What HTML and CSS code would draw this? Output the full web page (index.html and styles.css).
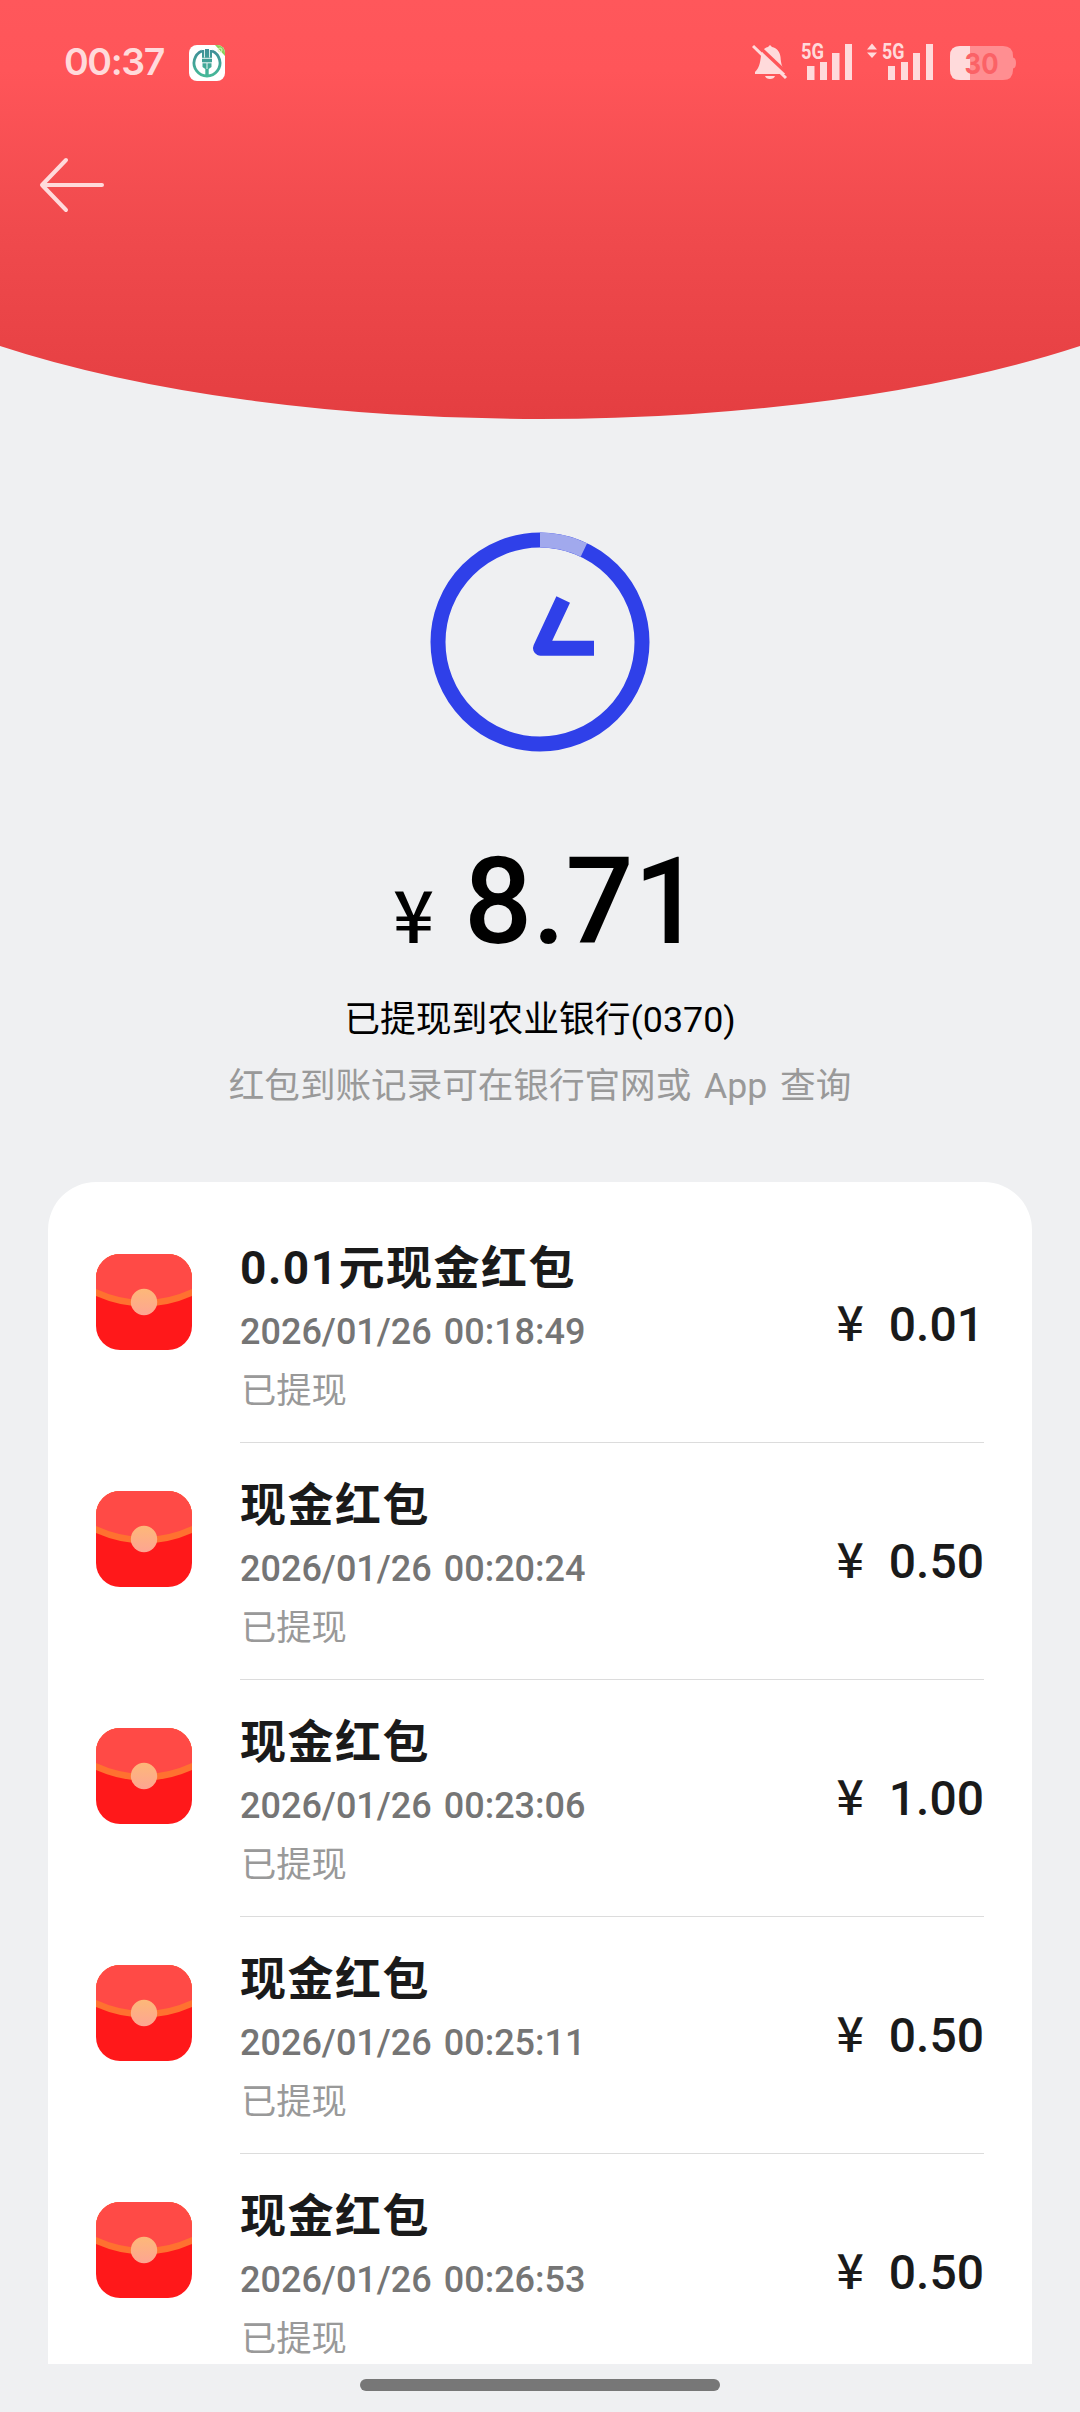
FILE: index.html
```html
<!DOCTYPE html>
<html lang="zh-CN">
<head>
<meta charset="utf-8">
<title>提现详情</title>
<link rel="stylesheet" href="styles.css">
</head>
<body>
<svg class="defs" width="0" height="0">
  <defs>
    <linearGradient id="seal" x1="0" y1="0" x2="0" y2="1"><stop offset="0" stop-color="#fdb878"/><stop offset="1" stop-color="#fda592"/></linearGradient>
    <clipPath id="packet-clip"><rect width="96" height="96" rx="24"/></clipPath>
    <symbol id="packet" viewBox="0 0 96 96">
      <g clip-path="url(#packet-clip)">
        <rect width="96" height="96" fill="#ff181a"/>
        <path d="M0 0H96V42Q48 63 0 42Z" fill="#ff7130"/>
        <path d="M0 0H96V35Q48 57 0 35Z" fill="#ff4a46"/>
      </g>
      <circle cx="48" cy="48" r="13.2" fill="url(#seal)"/>
    </symbol>
  </defs>
</svg>
<div class="screen">
  <header class="header">
    <div class="status">
      <div class="status-left">
        <span class="time">00:37</span>
        <svg width="36" height="36" viewBox="0 0 36 36">
          <defs><linearGradient id="bank" x1="0" y1="0" x2="0" y2="1"><stop offset="0" stop-color="#3f8f97"/><stop offset="1" stop-color="#45b898"/></linearGradient></defs>
          <rect width="36" height="36" rx="8" fill="#fff"/>
          <path d="M13 6A13 13 0 1 0 23 6" fill="none" stroke="url(#bank)" stroke-width="2.800"/>
          <path d="M13 5h2.200v7.500H16V4h4v8.500h.800V5H23v12.500h-.5V22l-2.800 2v7h-3.400v-7l-2.800-2v-4.500H13z" fill="url(#bank)"/>
          <path d="M13 13.300h10M13 17.800h10M18 18v6" stroke="#fff" stroke-width=".9"/>
          <path d="M26 0h2a8 8 0 0 1 8 8v3Z" fill="#8ccf5d"/>
          <circle cx="31" cy="5" r="2" fill="none" stroke="#d9f3b8"/>
        </svg>
      </div>
      <div class="status-right">
        <svg class="bell" width="36" height="36" viewBox="0 0 36 36" fill="#ffdadb">
          <path d="M9 12C10 6 13 3.500 16 3L18 1L20 3C25 4 28 8 28.500 13C29 20 30 23 33 27V30H3V28C7 24 8 20 9 12ZM13 32H23Q22 35 18 35Q14 35 13 32Z"/>
          <path d="M3 -1L37 31" stroke="#ff5559" stroke-width="3.500"/>
          <path d="M1 2L34 34" stroke="#ffdadb" stroke-width="3"/>
        </svg>
        <svg class="signal" width="52" height="42" viewBox="0 0 52 42" fill="#ffdadb">
          <text x="0" y="17" textLength="23" lengthAdjust="spacingAndGlyphs">5G</text>
          <path d="M6 24h7.500v14H6zM19 20h7v18h-7zM31 11h7.500v27H31zM44 2h7v36h-7z"/>
        </svg>
        <svg class="signal signal-data" width="67" height="42" viewBox="0 0 67 42" fill="#ffdadb">
          <path d="M0 7.500L5 1.500L10 7.500zM0 10.500L5 16L10 10.500z"/>
          <text x="15" y="17" textLength="22.500" lengthAdjust="spacingAndGlyphs">5G</text>
          <path d="M21 24h7v14h-7zM34 20h7v18h-7zM46 11h7v27h-7zM59 2h7v36h-7z"/>
        </svg>
        <svg class="battery" width="66" height="34" viewBox="0 0 66 34">
          <path d="M10 0H53Q63 0 63 10V11.500Q66 12 66 17Q66 22 63 22.500V24Q63 34 53 34H10Q0 34 0 24V10Q0 0 10 0Z" fill="#ff8e91"/>
          <path d="M20 0H10Q0 0 0 10V24Q0 34 10 34H20Z" fill="#ffdadb"/>
          <text x="14.500" y="27.500" textLength="34" lengthAdjust="spacingAndGlyphs">30</text>
        </svg>
      </div>
    </div>
    <nav class="nav">
      <svg width="66" height="56" viewBox="0 0 66 56" fill="none" stroke="#ffdadb" stroke-width="4" stroke-linecap="round" stroke-linejoin="round"><path d="M28 3L4 28L28 53M4 28H64"/></svg>
    </nav>
  </header>

  <main class="main">
    <svg class="clock" width="220" height="220" viewBox="0 0 220 220" fill="none" stroke="#2f40e9" stroke-width="15">
      <circle cx="110" cy="110" r="102"/>
      <path d="M110 8A102 102 0 0 1 153.900 17.900" stroke="#a1a9ed"/>
      <path d="M133.200 67.500L110.500 116.200H164" stroke-linejoin="round"/>
    </svg>
    <div class="amount"><span class="yen">¥</span><span class="total">8.71</span></div>
    <p class="bank">已提现到农业银行(0370)</p>
    <p class="hint">红包到账记录可在银行官网或 App 查询</p>

    <ul class="list">
      <li class="row">
        <svg class="packet"><use href="#packet"/></svg>
        <div class="body">
          <div class="info"><h2>0.01元现金红包</h2><time>2026/01/26 00:18:49</time><span class="state">已提现</span></div>
          <div class="price"><span>¥</span><b>0.01</b></div>
        </div>
      </li>
      <li class="row">
        <svg class="packet"><use href="#packet"/></svg>
        <div class="body">
          <div class="info"><h2>现金红包</h2><time>2026/01/26 00:20:24</time><span class="state">已提现</span></div>
          <div class="price"><span>¥</span><b>0.50</b></div>
        </div>
      </li>
      <li class="row">
        <svg class="packet"><use href="#packet"/></svg>
        <div class="body">
          <div class="info"><h2>现金红包</h2><time>2026/01/26 00:23:06</time><span class="state">已提现</span></div>
          <div class="price"><span>¥</span><b>1.00</b></div>
        </div>
      </li>
      <li class="row">
        <svg class="packet"><use href="#packet"/></svg>
        <div class="body">
          <div class="info"><h2>现金红包</h2><time>2026/01/26 00:25:11</time><span class="state">已提现</span></div>
          <div class="price"><span>¥</span><b>0.50</b></div>
        </div>
      </li>
      <li class="row">
        <svg class="packet"><use href="#packet"/></svg>
        <div class="body">
          <div class="info"><h2>现金红包</h2><time>2026/01/26 00:26:53</time><span class="state">已提现</span></div>
          <div class="price"><span>¥</span><b>0.50</b></div>
        </div>
      </li>
    </ul>
  </main>
  <footer class="home"><div class="home-bar"></div></footer>
</div>
</body>
</html>
```
FILE: styles.css
```css
* { box-sizing: border-box; margin: 0; padding: 0; }
body {
  width: 1080px;
  background: #eff0f2;
  font-family: Roboto, "Noto Sans CJK SC", sans-serif;
}
svg { display: block; flex: none; }
.defs { position: absolute; }
.screen {
  display: flex;
  flex-direction: column;
  width: 1080px;
  height: 2412px;
  overflow: hidden;
}
.header {
  flex: none;
  height: 419px;
  background: linear-gradient(#ff575b 0, #ff5559 70px, #f04a4d 230px, #e43e41 419px);
  clip-path: path("M0 0H1080V346A756 243.2 0 0 1 0 346Z");
}
.status {
  display: flex;
  justify-content: space-between;
  height: 126px;
  padding: 0 64px 0 64px;
}
.status-left { display: flex; align-items: center; gap: 24px; }
.time {
  width: 101px;
  margin-bottom: 3px;
  font: 600 37.5px/44px Inter, sans-serif;
  letter-spacing: -1.4px;
  white-space: nowrap;
  color: #ffdadb;
}
.status-right { display: flex; align-items: center; }
.bell { margin-bottom: 3px; }
.signal { margin-left: 13px; overflow: visible; }
.signal-data { margin-left: 14px; }
.battery { margin-left: 16px; }
.signal text { font: 700 22px Roboto, sans-serif; }
.battery text { font: 700 29px Inter, sans-serif; fill: #fb6266; }
.nav { padding: 31px 0 0 38px; }

.main {
  flex: 1;
  display: flex;
  flex-direction: column;
  align-items: center;
  min-height: 0;
}
.clock { margin-top: 113px; }
.amount {
  display: flex;
  align-items: baseline;
  justify-content: center;
  gap: 30px;
  height: 140px;
  margin-top: 80px;
  padding-left: 15px;
  line-height: 140px;
  color: #000;
}
.yen { font-family: "Noto Sans CJK SC", sans-serif; font-size: 72px; font-weight: 500; }
.total { font-size: 120px; font-weight: 500; }
.bank { margin-top: 21px; font-size: 35.8px; line-height: 54px; color: #000; }
.hint { margin-top: 12px; font-size: 35.6px; line-height: 54px; word-spacing: 4px; color: #999; }

.list {
  flex: 1;
  min-height: 0;
  width: 984px;
  margin-top: 69px;
  padding: 24px 48px 0;
  border-radius: 48px 48px 0 0;
  background: #fff;
  list-style: none;
  overflow: hidden;
}
.row { display: flex; gap: 48px; height: 237px; }
.packet { width: 96px; height: 96px; margin-top: 48px; }
.body {
  flex: 1;
  display: flex;
  justify-content: space-between;
  border-bottom: 1px solid #dcdcdc;
}
.info { display: flex; flex-direction: column; padding-top: 26px; }
.info h2 { font-size: 46px; line-height: 72px; font-weight: 700; letter-spacing: 1.5px; color: #1a1a1a; }
.info time { margin-top: 1px; font-size: 36px; line-height: 54px; word-spacing: 3px; color: #757575; font-weight: 500; }
.state { margin-top: 5px; padding-left: 1px; font-size: 35.3px; line-height: 54px; color: #999; }
.price {
  display: flex;
  align-items: baseline;
  gap: 25px;
  padding-top: 78px;
  font-size: 48px;
  line-height: 72px;
  color: #1a1a1a;
}
.price span { font-family: "Noto Sans CJK SC", sans-serif; font-weight: 500; }
.price b { font-weight: 500; }
.home { flex: none; height: 48px; padding-top: 15px; }
.home-bar { width: 360px; height: 12px; margin: 0 auto; border-radius: 6px; background: #777; }
```
